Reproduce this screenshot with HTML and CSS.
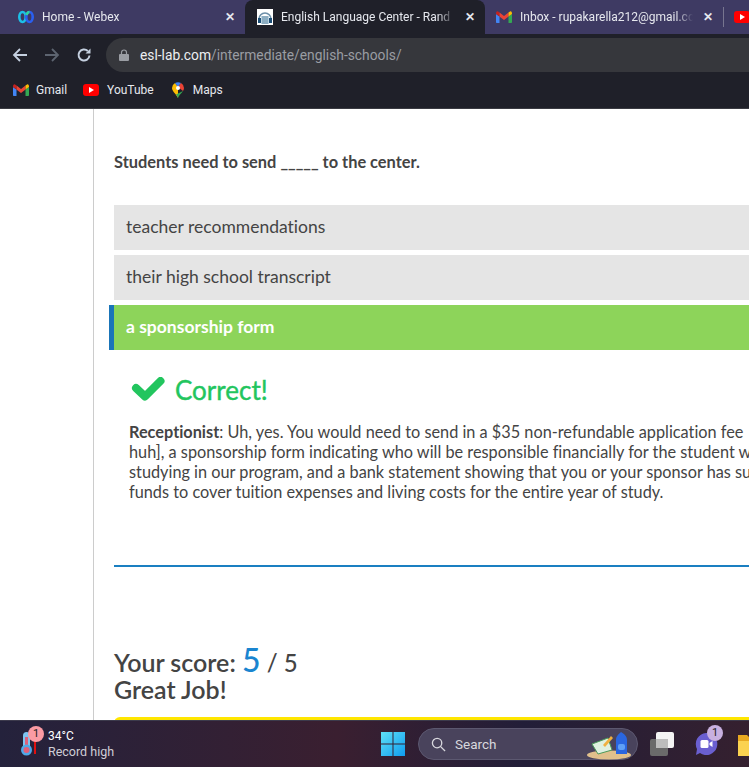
FILE: index.html
```html
<!doctype html>
<html lang="en">
  <head>
    <meta charset="utf-8">
    <title>English Language Center</title>
    <link rel="stylesheet" href="styles.css">
  </head>
  <body>

    <header class="browser">
      <div class="tabs">
        <div class="tab tab-first">
          <svg class="favicon" viewBox="0 0 16 16"><ellipse cx="4.500" cy="8" rx="3.200" ry="5" fill="none" stroke="#1cc0e8" stroke-width="2.600"/><ellipse cx="11.500" cy="8" rx="3.200" ry="5" fill="none" stroke="#2a5ff0" stroke-width="2.600"/><path d="M8.500 6c.6-2 1.700-3 3-3" fill="none" stroke="#2fd8a0" stroke-width="2.600"/></svg>
          <span class="tab-title">Home - Webex</span>
          <span class="tab-close">✕</span>
        </div>
        <div class="tab tab-active">
          <svg class="favicon" viewBox="0 0 16 16"><rect width="16" height="16" fill="#fff"/><path d="M2 10a6 6 0 0 1 12 0" fill="none" stroke="#6d8fa8" stroke-width="1.600"/><rect x="4" y="7" width="8" height="8" fill="#bcd3e0"/><path d="M6 7v8M8 7v8M10 7v8" stroke="#5d87a3"/><rect x="1" y="9" width="3" height="5" fill="#1c4f78"/><rect x="12" y="9" width="3" height="5" fill="#1c4f78"/></svg>
          <span class="tab-title">English Language Center - Rand</span>
          <span class="tab-close">✕</span>
        </div>
        <div class="tab tab-last">
          <svg class="favicon" viewBox="0 0 16 12"><path d="M0 3v8c0 .6.4 1 1 1h2.500V5.500L8 9" fill="#4285f4"/><path d="M16 3v8c0 .6-.4 1-1 1h-2.500V5.500L8 9" fill="#34a853"/><path d="M0 3l3.500 2.500V1.500L2 .4C1-.3 0 .6 0 3z" fill="#c5221f"/><path d="M3.500 5.500L8 9l4.500-3.500v-4L8 5 3.500 1.500z" fill="#ea4335"/><path d="M12.500 1.500v4L16 3c0-2.400-1-3.300-2-2.600z" fill="#fbbc04"/></svg>
          <span class="tab-title">Inbox - rupakarella212@gmail.co</span>
          <span class="tab-close">✕</span>
        </div>
        <div class="tab-sep"></div>
        <div class="yt yt-tab"><i></i></div>
      </div>

      <div class="toolbar">
        <svg class="nav" viewBox="0 0 16 16"><path d="M15 8H2M8 2L2 8l6 6" fill="none" stroke="#c5d0e0" stroke-width="1.800"/></svg>
        <svg class="nav" viewBox="0 0 16 16"><path d="M1 8h13M8 2l6 6-6 6" fill="none" stroke="#5d6470" stroke-width="1.800"/></svg>
        <svg class="nav" viewBox="0 0 16 16"><path d="M13.500 8.500A5.500 5.500 0 1 1 11.800 4" fill="none" stroke="#c5d0e0" stroke-width="2"/><path d="M14.500 1.500v5h-5z" fill="#c5d0e0"/></svg>
        <div class="omnibox">
          <svg class="lock" viewBox="0 0 10 12"><path d="M2.500 5V3.500a2.500 2.500 0 0 1 5 0V5" fill="none" stroke="#9a9da3" stroke-width="1.200"/><rect y="5" width="10" height="7" rx="1" fill="#9a9da3"/></svg>
          <span class="host">esl-lab.com</span><span class="path">/intermediate/english-schools/</span>
        </div>
      </div>

      <div class="bookmarks">
        <div class="bookmark">
          <svg class="favicon" viewBox="0 0 16 12"><path d="M0 3v8c0 .6.4 1 1 1h2.500V5.500L8 9" fill="#4285f4"/><path d="M16 3v8c0 .6-.4 1-1 1h-2.500V5.500L8 9" fill="#34a853"/><path d="M0 3l3.500 2.500V1.500L2 .4C1-.3 0 .6 0 3z" fill="#c5221f"/><path d="M3.500 5.500L8 9l4.500-3.500v-4L8 5 3.500 1.500z" fill="#ea4335"/><path d="M12.500 1.500v4L16 3c0-2.400-1-3.300-2-2.600z" fill="#fbbc04"/></svg>
          Gmail
        </div>
        <div class="bookmark">
          <div class="yt yt-mark"><i></i></div>
          YouTube
        </div>
        <div class="bookmark">
          <svg class="favicon" viewBox="0 0 12 16"><path d="M6 16C4 12 0 9 0 6a6 6 0 0 1 3-5l3 4z" fill="#fbbc04"/><path d="M3 1a6 6 0 0 1 6 0L6 5z" fill="#4285f4"/><path d="M9 1a6 6 0 0 1 3 5c0 1-.4 2-1 3L6 5z" fill="#ea4335"/><path d="M11 9c-1.500 2.500-4 4-5 7-.5-1.200-1.200-2.300-2-3.400z" fill="#34a853"/><circle cx="6" cy="6" r="2" fill="#fff"/></svg>
          Maps
        </div>
      </div>
    </header>

    <main class="page">
      <div class="column">
        <p class="question">Students need to send _____ to the center.</p>

        <div class="option">teacher recommendations</div>
        <div class="option">their high school transcript</div>
        <div class="option option-right">a sponsorship form</div>

        <div class="feedback">
          <div class="verdict">
            <svg class="check" viewBox="0 0 34 26"><path d="M5 11l9 8.500L29.500 4" fill="none" stroke="#22c55e" stroke-width="8" stroke-linejoin="round" stroke-linecap="round"/></svg>
            <span>Correct!</span>
          </div>
          <p class="answer"><b>Receptionist</b>: Uh, yes. You would need to send in a $35 non-refundable application fee</p>
          <p class="answer">huh], a sponsorship form indicating who will be responsible financially for the student while</p>
          <p class="answer">studying in our program, and a bank statement showing that you or your sponsor has sufficient</p>
          <p class="answer">funds to cover tuition expenses and living costs for the entire year of study.</p>
        </div>

        <hr class="rule">

        <div class="score">
          <div>Your score: <span class="score-num">5</span> <span class="score-total">/ 5</span></div>
          <div>Great Job!</div>
        </div>

        <div class="next-bar"></div>
      </div>
    </main>

    <footer class="taskbar">
      <div class="weather">
        <svg class="thermo" viewBox="0 0 18 26"><rect x="4" y="1" width="7" height="18" rx="3.500" fill="#7ec4f0"/><rect x="6" y="6" width="3" height="14" fill="#e0607a"/><circle cx="7.500" cy="19" r="5.500" fill="#4fa8e8"/><circle cx="7.500" cy="19" r="3" fill="#e0607a"/><rect x="15" y="8" width="2" height="15" fill="#e01010"/></svg>
        <span class="badge badge-red">1</span>
        <div class="weather-text">
          <div>34°C</div>
          <div class="weather-sub">Record high</div>
        </div>
      </div>

      <div class="task-icons">
        <svg class="winlogo" viewBox="0 0 24 24"><defs><linearGradient id="win" x1="0" y1="0" x2="1" y2="1"><stop offset="0" stop-color="#5fe0f5"/><stop offset="1" stop-color="#0f9cf0"/></linearGradient></defs><path d="M0 0h11.500v11.500H0zM12.500 0H24v11.500H12.500zM0 12.500h11.500V24H0zM12.500 12.500H24V24H12.500z" fill="url(#win)"/></svg>
        <div class="search">
          <svg class="search-icon" viewBox="0 0 16 16"><circle cx="6.500" cy="6.500" r="5" fill="none" stroke="#d8d8de" stroke-width="1.400"/><path d="M10 10l5 5" stroke="#d8d8de" stroke-width="1.400"/></svg>
          <span>Search</span>
          <svg class="search-art" viewBox="0 0 46 30"><ellipse cx="23" cy="25" rx="22" ry="4.500" fill="#e0c08c"/><path d="M6 14l16-6 4 12-14 4z" fill="#dff0e0" stroke="#4c9a5a"/><path d="M17 15l8-9 2 2-8 9z" fill="#f0b040"/><path d="M30 10c0-4 3-6 5-8 3 2 6 4 6 8v14H30z" fill="#2a66e0"/><rect x="32" y="14" width="7" height="6" rx="2" fill="#5fa0f5"/></svg>
        </div>
        <svg class="taskview" viewBox="0 0 24 24"><rect y="7" width="18" height="17" rx="2" fill="#6a6a6a"/><rect x="6" width="18" height="16" rx="2" fill="#f4f4f4"/><rect x="6" y="7" width="12" height="9" fill="#bdbdbd"/></svg>
        <div class="chat">
          <svg class="chat-icon" viewBox="0 0 24 24"><path d="M12 1a11 11 0 1 1-6 20l-4 2 1-6A11 11 0 0 1 12 1z" fill="#6a5fd0"/><rect x="6.500" y="8" width="8" height="8" rx="1.500" fill="#fff"/><path d="M15.500 11l3-2v6l-3-2z" fill="#fff"/></svg>
          <span class="badge badge-purple">1</span>
        </div>
        <svg class="folder" viewBox="0 0 24 24"><path d="M0 3h9l3 3h12v18H0z" fill="#e8a820"/><rect y="9" width="24" height="15" fill="#fbd250"/></svg>
      </div>
    </footer>

  </body>
</html>
```

FILE: styles.css
```css
* {
  margin: 0;
  padding: 0;
  box-sizing: border-box;
}

html, body {
  height: 767px;
  overflow: hidden;
}

body {
  display: flex;
  flex-direction: column;
  font-family: "Lato", "Open Sans", sans-serif;
  font-variant-ligatures: none;
  background-color: white;
}

/* browser chrome */
.browser {
  height: 109px;
  flex: none;
  background-color: #1f2029;
  font-family: "Roboto", "Open Sans", sans-serif;
  color: #e6e8ee;
  border-bottom: 1px solid #3a3b42;
  overflow: hidden;
}

.tabs {
  display: flex;
  align-items: center;
  height: 34px;
  background-color: #3e3a63;
}

.tab {
  display: flex;
  align-items: center;
  height: 34px;
  font-size: 12px;
  flex: none;
  white-space: nowrap;
}

.tab-first {
  width: 245px;
  padding-left: 18px;
  border-bottom-right-radius: 8px;
}

.tab-active {
  width: 240px;
  padding-left: 12px;
  background-color: #1f2029;
  border-radius: 8px 8px 0 0;
}

.tab-last {
  width: 238px;
  padding-left: 11px;
  border-bottom-left-radius: 8px;
}

.tab .favicon {
  margin-right: 8px;
}

.tab-title {
  flex: 1;
  overflow: hidden;
  -webkit-mask-image: linear-gradient(to right, black 90%, transparent);
  mask-image: linear-gradient(to right, black 90%, transparent);
}

.tab-close {
  width: 30px;
  text-align: center;
  font-size: 12px;
  font-weight: bold;
  color: #e6e8ee;
}

.tab-sep {
  width: 1px;
  height: 20px;
  background-color: #77758f;
  flex: none;
}

.favicon {
  width: 16px;
  height: 16px;
  flex: none;
}

.yt {
  width: 16px;
  height: 12px;
  background-color: #f00;
  border-radius: 3px;
  display: flex;
  align-items: center;
  justify-content: center;
  flex: none;
}

.yt i {
  border-left: 5px solid white;
  border-top: 3px solid transparent;
  border-bottom: 3px solid transparent;
}

.yt-tab {
  margin-left: 10px;
}

.yt-mark {
  margin-right: 1px;
}

.toolbar {
  display: flex;
  align-items: center;
  height: 34px;
  margin-top: 4px;
  padding-left: 12px;
}

.nav {
  width: 16px;
  height: 16px;
  margin-right: 16px;
  flex: none;
}

.omnibox {
  flex: 1;
  height: 34px;
  margin-left: -2px;
  padding-left: 13px;
  display: flex;
  align-items: center;
  background-color: #36373c;
  border-radius: 17px 0 0 17px;
  font-size: 13.800px;
}

.lock {
  width: 10px;
  height: 12px;
  margin-right: 11px;
}

.host {
  color: #eceef2;
}

.path {
  color: #9a9da3;
}

.bookmarks {
  display: flex;
  align-items: center;
  height: 36px;
  padding-left: 13px;
  gap: 16px;
  font-size: 12px;
}

.bookmark {
  display: flex;
  align-items: center;
  gap: 7px;
}

/* quiz page */
.page {
  flex: 1;
  overflow: hidden;
  padding-left: 93px;
}

.column {
  width: 800px;
  height: 611px;
  border-left: 1px solid #ccc;
  padding-left: 20px;
  padding-top: 43px;
  color: #444;
}

.question {
  font-size: 16.400px;
  font-weight: bold;
  line-height: 20px;
  margin-bottom: 33px;
}

.option {
  height: 45px;
  margin-bottom: 5px;
  padding-left: 12px;
  line-height: 44px;
  font-size: 17.500px;
  background-color: #e5e5e5;
}

.option-right {
  margin-left: -5px;
  padding-left: 12px;
  font-weight: bold;
  color: white;
  background-color: #8dd45a;
  border-left: 5px solid #1a75b8;
}

.feedback {
  padding-left: 15px;
  padding-top: 10px;
}

.verdict {
  display: flex;
  align-items: center;
  gap: 10px;
  height: 50px;
  padding-left: 2px;
  margin-bottom: 7px;
  font-size: 26px;
  color: #22c55e;
  -webkit-text-stroke: 0.400px #22c55e;
}

.check {
  width: 34px;
  height: 26px;
  flex: none;
}

.answer {
  font-size: 16.300px;
  line-height: 20px;
  white-space: nowrap;
}

.rule {
  border: none;
  height: 2px;
  margin-top: 63px;
  background-color: #1a7fc1;
}

.score {
  margin-top: 79px;
  font-size: 25px;
  font-weight: 600;
  line-height: 27px;
}

.score-num {
  font-size: 32px;
  font-weight: 500;
  color: #1a85d0;
}

.score-total {
  font-size: 24px;
  font-weight: 500;
}

.next-bar {
  height: 12px;
  margin-top: 14px;
  background-color: #ffe600;
  border-radius: 6px 0 0 0;
}

/* windows taskbar */
.taskbar {
  height: 47px;
  flex: none;
  display: flex;
  align-items: center;
  background: linear-gradient(to right, #24223c, #3a1f30 45%, #221e38 70%, #35202f);
  border-top: 1px solid #3c3a4c;
  font-family: "Roboto", "Open Sans", sans-serif;
  color: white;
  overflow: hidden;
}

.weather {
  display: flex;
  align-items: center;
  position: relative;
  padding-left: 19px;
  width: 381px;
  flex: none;
}

.thermo {
  width: 18px;
  height: 26px;
  flex: none;
}

.badge {
  position: absolute;
  width: 16px;
  height: 16px;
  border-radius: 50%;
  font-size: 11px;
  line-height: 16px;
  text-align: center;
  color: #222;
}

.badge-red {
  left: 28px;
  top: -2px;
  background-color: #fb9ba4;
}

.badge-purple {
  right: -5px;
  top: -7px;
  background-color: #c8b0e0;
}

.weather-text {
  margin-left: 11px;
  font-size: 12px;
  line-height: 16px;
}

.weather-sub {
  color: #d0ced6;
  font-size: 12.500px;
}

.task-icons {
  display: flex;
  align-items: center;
  flex: none;
}

.winlogo {
  width: 24px;
  height: 24px;
  flex: none;
}

.search {
  display: flex;
  align-items: center;
  width: 220px;
  height: 32px;
  margin-left: 13px;
  margin-right: 12px;
  padding-left: 12px;
  background-color: #49435c;
  border: 1px solid #5c5870;
  border-radius: 16px;
  font-size: 13.500px;
  color: #d8d8de;
  position: relative;
}

.search-icon {
  width: 15px;
  height: 15px;
  margin-right: 9px;
}

.search-art {
  position: absolute;
  right: 5px;
  top: 1px;
  width: 46px;
  height: 30px;
}

.taskview {
  width: 24px;
  height: 24px;
  flex: none;
}

.chat {
  position: relative;
  width: 24px;
  height: 24px;
  margin-left: 20px;
  flex: none;
}

.chat-icon {
  width: 24px;
  height: 24px;
}

.folder {
  width: 24px;
  height: 24px;
  margin-left: 20px;
  flex: none;
}
```
